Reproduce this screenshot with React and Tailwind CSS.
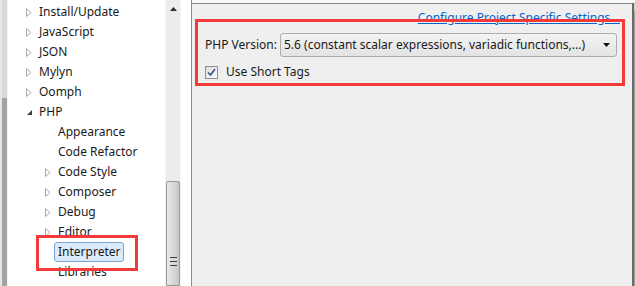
import React from "react";

const font = { fontFamily: '"Noto Sans", "Liberation Sans", sans-serif' };

function Arrow({ open }) {
  if (open) {
    return (
      <svg width="7" height="7" viewBox="0 0 7 7" className="block">
        <path d="M6 1 L6 6 L1 6 Z" fill="#404040" />
      </svg>
    );
  }
  return (
    <svg width="6" height="9" viewBox="0 0 6 9" className="block">
      <path d="M0.5 0.5 L5 4.5 L0.5 8.5 Z" fill="none" stroke="#a8a8a8" strokeWidth="1" />
    </svg>
  );
}

const items = [
  { t: "Install/Update", l: 1, a: "c" },
  { t: "JavaScript", l: 1, a: "c" },
  { t: "JSON", l: 1, a: "c" },
  { t: "Mylyn", l: 1, a: "c" },
  { t: "Oomph", l: 1, a: "c" },
  { t: "PHP", l: 1, a: "o" },
  { t: "Appearance", l: 2 },
  { t: "Code Refactor", l: 2 },
  { t: "Code Style", l: 2, a: "c" },
  { t: "Composer", l: 2, a: "c" },
  { t: "Debug", l: 2, a: "c" },
  { t: "Editor", l: 2, a: "c" },
  { t: "Interpreter", l: 2, sel: true },
  { t: "Libraries", l: 2 },
];

export default function App() {
  return (
    <div className="relative w-[635px] h-[286px] overflow-hidden bg-[#f0f0f0] text-[12px] text-[#1a1a1a]" style={font}>
      <div className="flex h-full">
        {/* left edge strip */}
        <div className="flex w-[8px] shrink-0">
          <div className="w-[2px] bg-[#e6e6e6]" />
          <div className="flex w-[5px] flex-col">
            <div className="h-[98px] bg-[#d8d8d8]" />
            <div className="flex-1 bg-[#a4a4a4]" />
          </div>
          <div className="w-[1px] bg-[#f4f4f4]" />
        </div>
        {/* tree */}
        <div className="flex w-[183px] shrink-0 bg-white">
          <div className="w-[157px] pt-[2px]">
            {items.map((it) => (
              <div key={it.t} className="flex h-[20px] items-center">
                <div className={it.l === 1 ? "w-[18px]" : "w-[37px]"} />
                <div className="flex w-[13px] items-center">
                  {it.a === "c" && <Arrow />}
                  {it.a === "o" && <Arrow open />}
                </div>
                {it.sel ? (
                  <span className="-ml-[4px] rounded-[3px] border border-[#7da2ce] bg-[#dcebfc] px-[3px] leading-[18px]">
                    {it.t}
                  </span>
                ) : (
                  <span className="whitespace-nowrap leading-[18px]">{it.t}</span>
                )}
              </div>
            ))}
          </div>
          {/* scrollbar */}
          <div className="flex w-[16px] flex-col bg-[#ececec] border-x border-[#f4f4f4]">
            <div className="flex h-[17px] items-center justify-center">
              <svg width="7" height="4" viewBox="0 0 7 4">
                <path d="M3.5 0 L7 4 L0 4 Z" fill="#303030" />
              </svg>
            </div>
            <div className="h-[164px]" />
            <div className="flex flex-1 flex-col items-center rounded-t-[2px] border border-[#9a9a9a] bg-gradient-to-r from-[#e8e8e8] via-[#d8d8d8] to-[#c8c8c8]">
              <div className="mt-[75px] flex flex-col gap-[1px]">
                <div className="h-[1px] w-[7px] bg-[#404040]" />
                <div className="h-[1px] w-[7px] bg-[#e0e0e0]" />
                <div className="h-[1px] w-[7px] bg-[#404040]" />
                <div className="h-[1px] w-[7px] bg-[#e0e0e0]" />
                <div className="h-[1px] w-[7px] bg-[#404040]" />
              </div>
            </div>
          </div>
          <div className="flex-1 bg-white" />
        </div>
        {/* right panel */}
        <div className="flex flex-1 flex-col border-l border-[#8a8a8a]">
          <div className="h-[3px] bg-[#f8f8f8]" />
          <div className="flex flex-1">
            <div className="flex flex-1 flex-col border-t border-[#8a8a8a] bg-[#efefef]">
              <div className="flex h-[21px] justify-end pr-[12px] pt-[7px]">
                <span className="text-[#0066cc] underline leading-[14px] whitespace-nowrap">
                  Configure Project Specific Settings...
                </span>
              </div>
              <div className="ml-[13px] mt-[8px] flex items-center">
                <span className="w-[75px] whitespace-nowrap">PHP Version:</span>
                <div className="flex h-[24px] w-[337px] items-center justify-between rounded-[3px] border border-[#acacac] bg-gradient-to-b from-[#f3f3f3] to-[#e3e3e3] pl-[3px] pr-[6px]">
                  <span className="whitespace-nowrap">5.6 (constant scalar expressions, variadic functions,...)</span>
                  <svg width="7" height="4" viewBox="0 0 7 4">
                    <path d="M0 0 L7 0 L3.5 4 Z" fill="#101010" />
                  </svg>
                </div>
              </div>
              <div className="ml-[13px] mt-[6px] flex items-center">
                <div className="flex h-[13px] w-[13px] items-center justify-center border border-[#8e8f8f] bg-gradient-to-br from-[#e0e0e0] to-[#fafafa]">
                  <svg width="9" height="9" viewBox="0 0 9 9">
                    <path d="M1 4.5 L3.5 7 L8 1" fill="none" stroke="#3c4e8c" strokeWidth="1.6" />
                  </svg>
                </div>
                <span className="ml-[8px] whitespace-nowrap">Use Short Tags</span>
              </div>
            </div>
            <div className="w-[2px] bg-[#6a6a6a]" />
            <div className="flex w-[1px] flex-col">
              <div className="h-[8px] bg-[#d0d0d0]" />
              <div className="flex-1 bg-[#a0a0a0]" />
            </div>
          </div>
        </div>
      </div>
      {/* annotation boxes */}
      <div className="absolute left-[195px] top-[19px] h-[67px] w-[430px] border-[3px] border-[#f23a3a]" />
      <div className="absolute left-[36px] top-[235px] h-[36px] w-[102px] border-[3px] border-[#f23a3a]" />
    </div>
  );
}
